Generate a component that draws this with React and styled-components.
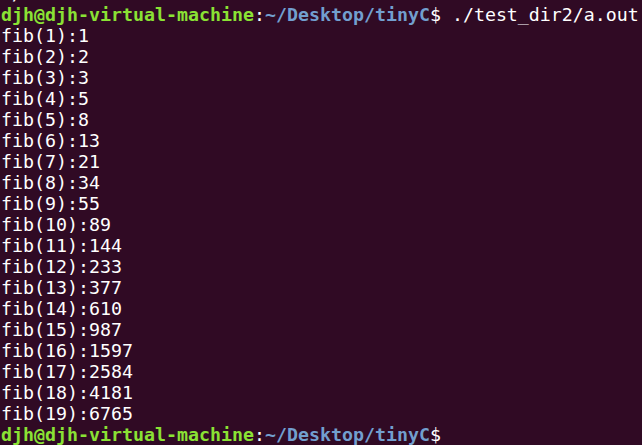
import React from 'react'
import styled, { createGlobalStyle } from 'styled-components'

const user = 'djh@djh-virtual-machine'
const cwd = '~/Desktop/tinyC'

// fib(1)=1, fib(2)=2, fib(n)=fib(n-1)+fib(n-2)
const results = []
for (let n = 1, a = 1, b = 2; n <= 19; n++, [a, b] = [b, a + b]) {
  results.push({ n, value: a })
}

const Prompt = ({ command }) => (
  <Line>
    <User>{user}</User>
    <Plain>:</Plain>
    <Path>{cwd}</Path>
    <Plain>$ {command}</Plain>
  </Line>
)

const App = () => (
  <>
    <GlobalStyle />
    <Terminal>
      <Scrollback>
        <Line>2/a.out</Line>
        <Prompt command="./test_dir2/a.out" />
        {results.map(r => (
          <Line key={r.n}>
            fib({r.n}):{r.value}
          </Line>
        ))}
        <Prompt command="" />
      </Scrollback>
    </Terminal>
  </>
)

const GlobalStyle = createGlobalStyle`
  html, body {
    margin: 0;
    padding: 0;
    background: #300a24;
  }
`

const Terminal = styled.div`
  width: 642px;
  height: 445px;
  overflow: hidden;
  background: #300a24;
  color: #ffffff;
  font-family: 'DejaVu Sans Mono', monospace;
  font-size: 18.27px;
  line-height: 21px;
`

const Scrollback = styled.div`
  margin-top: -17px;
  padding-left: 1px;
`

const Line = styled.div`
  white-space: pre;
  height: 21px;
`

const User = styled.span`
  color: #8ae234;
  font-weight: bold;
`

const Path = styled.span`
  color: #729fcf;
  font-weight: bold;
`

const Plain = styled.span`
  color: #ffffff;
`

export default App
